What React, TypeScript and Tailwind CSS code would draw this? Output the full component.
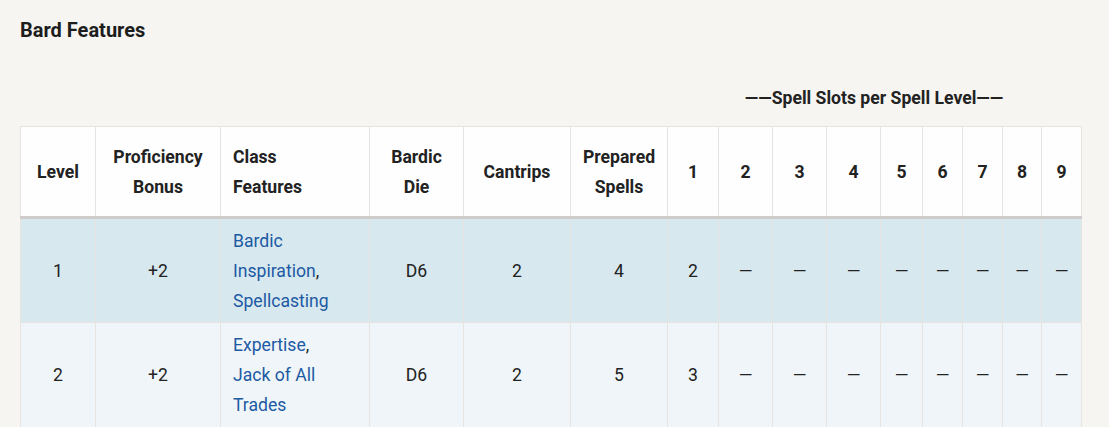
const slotCols = ['1', '2', '3', '4', '5', '6', '7', '8', '9'];

const rows = [
  {
    level: '1',
    bonus: '+2',
    features: [
      { name: 'Bardic Inspiration', comma: true },
      { name: 'Spellcasting', comma: false },
    ],
    die: 'D6',
    cantrips: '2',
    prepared: '4',
    slots: ['2', '—', '—', '—', '—', '—', '—', '—', '—'],
    bg: 'bg-[#d8e8ef]',
  },
  {
    level: '2',
    bonus: '+2',
    features: [
      { name: 'Expertise', comma: true },
      { name: 'Jack of All Trades', comma: false },
    ],
    die: 'D6',
    cantrips: '2',
    prepared: '5',
    slots: ['3', '—', '—', '—', '—', '—', '—', '—', '—'],
    bg: 'bg-[#eff5f8]',
  },
];

export default function App() {
  return (
    <div className="min-h-screen bg-[#f6f5f2] text-[#222] font-['Roboto',sans-serif] pl-5 pt-[17px]">
      {/* Title */}
      <h2 className="text-[20px] leading-[26px] font-bold text-[#1d1d1d]">Bard Features</h2>

      {/* Spell slots caption */}
      <div className="mt-[43px] w-[1061px] flex">
        <div className="w-[647px]" />
        <div className="w-[414px] text-center text-[17.6px] leading-[24px] font-bold text-[#222]">
          ——Spell Slots per Spell Level——
        </div>
      </div>

      {/* Table */}
      <table className="mt-[16px] table-fixed w-[1061px] border-collapse text-[17.6px]">
        <colgroup>
          <col className="w-[75px]" />
          <col className="w-[125px]" />
          <col className="w-[149px]" />
          <col className="w-[94px]" />
          <col className="w-[107px]" />
          <col className="w-[97px]" />
          <col className="w-[51px]" />
          <col className="w-[54px]" />
          <col className="w-[54px]" />
          <col className="w-[54px]" />
          <col className="w-[42px]" />
          <col className="w-[40px]" />
          <col className="w-[40px]" />
          <col className="w-[39px]" />
          <col className="w-[40px]" />
        </colgroup>
        <thead>
          <tr className="bg-[#fefefe] border-b-[3px] border-b-[#cfcccb] h-[91px]">
            <th className="border border-[#e6e3e1] px-2 text-center font-bold leading-[30px]">Level</th>
            <th className="border border-[#e6e3e1] px-2 text-center font-bold leading-[30px]">Proficiency Bonus</th>
            <th className="border border-[#e6e3e1] pl-[12px] pr-[24px] text-left font-bold leading-[30px]">Class Features</th>
            <th className="border border-[#e6e3e1] px-2 text-center font-bold leading-[30px]">Bardic Die</th>
            <th className="border border-[#e6e3e1] px-2 text-center font-bold leading-[30px]">Cantrips</th>
            <th className="border border-[#e6e3e1] px-2 text-center font-bold leading-[30px]">Prepared Spells</th>
            {slotCols.map((c) => (
              <th key={c} className="border border-[#e6e3e1] px-1 text-center font-bold leading-[30px]">
                {c}
              </th>
            ))}
          </tr>
        </thead>
        <tbody>
          {rows.map((r) => (
            <tr key={r.level} className={`${r.bg} h-[105px]`}>
              <td className="border border-[#e6e3e1] px-2 text-center leading-[30px]">{r.level}</td>
              <td className="border border-[#e6e3e1] px-2 text-center leading-[30px]">{r.bonus}</td>
              <td className="border border-[#e6e3e1] pl-[12px] pr-[24px] text-left leading-[30px]">
                {r.features.map((f) => (
                  <span key={f.name}>
                    <a className="text-[#1c5aa3]">{f.name}</a>
                    {f.comma ? ', ' : ''}
                  </span>
                ))}
              </td>
              <td className="border border-[#e6e3e1] px-2 text-center leading-[30px]">{r.die}</td>
              <td className="border border-[#e6e3e1] px-2 text-center leading-[30px]">{r.cantrips}</td>
              <td className="border border-[#e6e3e1] px-2 text-center leading-[30px]">{r.prepared}</td>
              {r.slots.map((s, i) => (
                <td key={i} className="border border-[#e6e3e1] px-1 text-center leading-[30px]">
                  {s}
                </td>
              ))}
            </tr>
          ))}
        </tbody>
      </table>
    </div>
  );
}
